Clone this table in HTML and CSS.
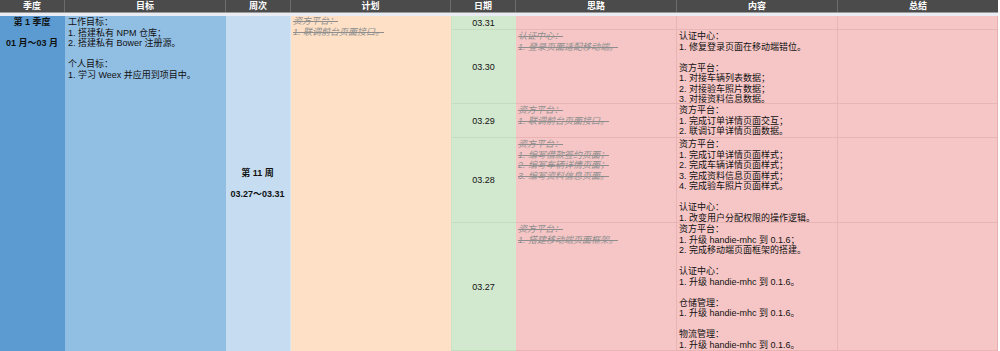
FILE: index.html
```html
<!DOCTYPE html>
<html lang="zh-CN">
<head>
<meta charset="utf-8">
<title>周报</title>
<link rel="stylesheet" href="styles.css">
</head>
<body>
<div class="sheet">
  <div class="head">
    <div class="hc">季度</div>
    <div class="hc">目标</div>
    <div class="hc">周次</div>
    <div class="hc">计划</div>
    <div class="hc">日期</div>
    <div class="hc">思路</div>
    <div class="hc">内容</div>
    <div class="hc">总结</div>
  </div>
  <div class="band"></div>
  <div class="grid">
    <div class="cell quarter span bold center">第 1 季度<br><br>01 月～03 月</div>
    <div class="cell goal span">工作目标：<br>1. 搭建私有 NPM 仓库；<br>2. 搭建私有 Bower 注册源。<br><br>个人目标：<br>1. 学习 Weex 并应用到项目中。</div>
    <div class="cell week span bold middle">第 11 周<br><br>03.27～03.31</div>
    <div class="cell plan span done">资方平台：<br>1. 联调前台页面接口。</div>

    <div class="cell date r1">03.31</div>
    <div class="cell pink r1"></div>
    <div class="cell pink r1"></div>
    <div class="cell pink last r1"></div>

    <div class="cell date r2">03.30</div>
    <div class="cell pink r2 done">认证中心：<br>1. 登录页面适配移动端。</div>
    <div class="cell pink r2">认证中心：<br>1. 修复登录页面在移动端错位。<br><br>资方平台：<br>1. 对接车辆列表数据；<br>2. 对接验车照片数据；<br>3. 对接资料信息数据。</div>
    <div class="cell pink last r2"></div>

    <div class="cell date r3">03.29</div>
    <div class="cell pink r3 done">资方平台：<br>1. 联调前台页面接口。</div>
    <div class="cell pink r3">资方平台：<br>1. 完成订单详情页面交互；<br>2. 联调订单详情页面数据。</div>
    <div class="cell pink last r3"></div>

    <div class="cell date r4">03.28</div>
    <div class="cell pink r4 done">资方平台：<br>1. 编写借款签约页面；<br>2. 编写车辆详情页面；<br>3. 编写资料信息页面。</div>
    <div class="cell pink r4">资方平台：<br>1. 完成订单详情页面样式；<br>2. 完成车辆详情页面样式；<br>3. 完成资料信息页面样式；<br>4. 完成验车照片页面样式。<br><br>认证中心：<br>1. 改变用户分配权限的操作逻辑。</div>
    <div class="cell pink last r4"></div>

    <div class="cell date r5">03.27</div>
    <div class="cell pink r5 done">资方平台：<br>1. 搭建移动端页面框架。</div>
    <div class="cell pink r5">资方平台：<br>1. 升级 handie-mhc 到 0.1.6；<br>2. 完成移动端页面框架的搭建。<br><br>认证中心：<br>1. 升级 handie-mhc 到 0.1.6。<br><br>仓储管理：<br>1. 升级 handie-mhc 到 0.1.6。<br><br>物流管理：<br>1. 升级 handie-mhc 到 0.1.6。</div>
    <div class="cell pink last r5"></div>
  </div>
</div>
</body>
</html>
```

FILE: styles.css
```css
* { box-sizing: border-box; }
html, body { margin: 0; padding: 0; background: #ffffff; }
body {
  font-family: "Liberation Sans", "Noto Sans CJK SC", sans-serif;
  font-size: 9px;
  line-height: 10.5px;
  color: #111;
}
.sheet { width: 998px; }
.head {
  display: grid;
  grid-template-columns: 65px 161px 65px 160px 65px 161px 161px 160px;
  height: 12px;
  background: #4b4b4b;
  border-bottom: 1px solid #9a9a9a;
  height: 13px;
}
.hc {
  color: #fff;
  font-weight: bold;
  text-align: center;
  line-height: 12px;
  border-right: 1px solid #6c6c6c;
}
.hc:last-child { border-right: none; }
.band { height: 3px; background: #e9ecf2; }
.grid {
  display: grid;
  grid-template-columns: 65px 161px 65px 160px 65px 161px 161px 160px;
  grid-template-rows: 14px 74px 34px 85px 128px;
}
.cell { padding: 1px 3px 0 2px; overflow: hidden; white-space: nowrap; }
.span { grid-row: 1 / 6; }
.quarter { background: #5b9bd2; grid-column: 1; padding-top: 1px; }
.goal { background: #91bee3; grid-column: 2; padding-left: 3px; }
.week { background: #c6ddf1; grid-column: 3; border-right: 1px solid #d9e6f2; }
.plan { background: #fde0c6; grid-column: 4; padding-top: 0; }
.bold { font-weight: bold; }
.center { text-align: center; }
.middle { display: flex; align-items: center; justify-content: center; text-align: center; }
.date {
  grid-column: 5;
  background: #d3e9cf;
  border-bottom: 1px solid #c3ddbf;
  border-left: 1px solid #cfe3cb;
  display: flex;
  align-items: center;
  justify-content: center;
}
.pink {
  background: #f6c6c6;
  border-right: 1px solid #e8b4b4;
  border-bottom: 1px solid #e8b4b4;
}
.last { border-right: 1px solid #e3b1b1; }
.done {
  color: #8e8e8e;
  font-style: italic;
  text-decoration: line-through;
}
.r1 { grid-row: 1; }
.r2 { grid-row: 2; }
.r3 { grid-row: 3; }
.r4 { grid-row: 4; }
.r5 { grid-row: 5; }
```
